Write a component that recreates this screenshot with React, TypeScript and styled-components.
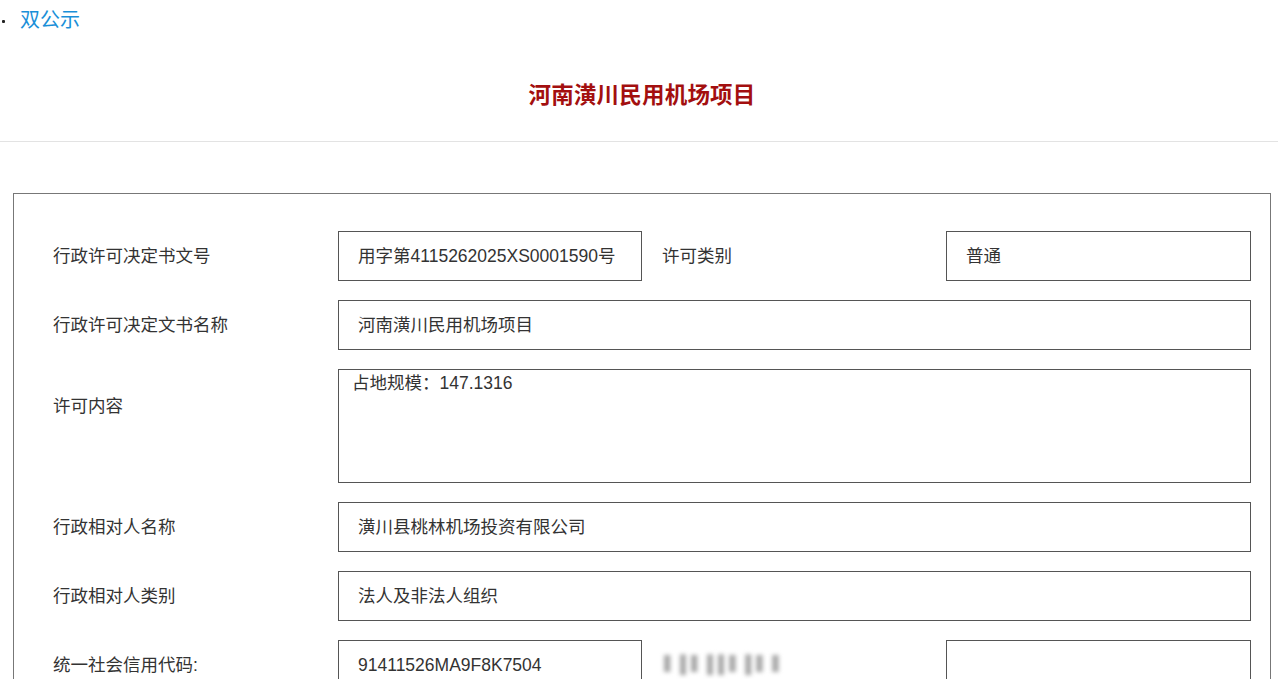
import styled, { createGlobalStyle } from "styled-components";

const GlobalStyle = createGlobalStyle`
  html, body {
    margin: 0;
    padding: 0;
    background: #ffffff;
  }
  body {
    font-family: "Liberation Sans", "Noto Sans CJK SC", sans-serif;
    color: #333333;
  }
`;

interface FieldItem {
  label: string;
  value: string;
}

const StyledPage = styled.div`
  width: 1278px;
  height: 679px;
  overflow: hidden;
`;

const StyledCrumbs = styled.div`
  display: flex;
  align-items: center;
  height: 41px;
  font-size: 20px;
`;

const StyledDot = styled.span`
  width: 3px;
  height: 3px;
  margin: 1px 15px 0 2px;
  background: #222;
  border-radius: 1px;
`;

const StyledCrumbLink = styled.a`
  color: #1a8fd8;
  text-decoration: none;
  line-height: 41px;
`;

const StyledHeader = styled.div`
  display: flex;
  align-items: center;
  justify-content: center;
  height: 101px;
  padding-top: 3px;
  box-sizing: border-box;
  border-bottom: 1px solid #e3e3e3;
`;

const StyledTitle = styled.h1`
  margin: 0;
  padding-left: 6px;
  color: #a30f0f;
  font-size: 22.5px;
  font-weight: bold;
  letter-spacing: 0.2px;
`;

const StyledPanel = styled.div`
  box-sizing: border-box;
  width: 1258px;
  margin: 51px 0 0 13px;
  border: 1px solid #777;
  padding: 37px 19px 40px 39px;
`;

const StyledGrid = styled.div`
  display: grid;
  grid-template-columns: 285px 304px 304px 305px;
  row-gap: 19px;
`;

const StyledLabel = styled.div<{ $offset?: number; $inner?: boolean }>`
  align-self: start;
  height: 50px;
  line-height: 50px;
  font-size: 17.5px;
  color: #333;
  white-space: nowrap;
  padding-top: ${(p) => p.$offset ?? 0}px;
  padding-left: ${(p) => (p.$inner ? 20 : 0)}px;
`;

const StyledInput = styled.div<{ $span?: boolean }>`
  grid-column: ${(p) => (p.$span ? "2 / 5" : "auto")};
  box-sizing: border-box;
  height: 50px;
  border: 1px solid #555;
  padding-left: 19px;
  line-height: 48px;
  font-size: 17.5px;
  color: #333;
  white-space: nowrap;
  overflow: hidden;
`;

const StyledTextArea = styled.div`
  grid-column: 2 / 5;
  box-sizing: border-box;
  height: 114px;
  border: 1px solid #555;
  padding: 1px 13px;
  font-size: 17.5px;
  line-height: 24px;
  color: #333;
`;

const StyledBlurred = styled.div`
  align-self: start;
  height: 50px;
  line-height: 50px;
  margin-left: 22px;
  font-size: 17px;
  color: #a8a8a8;
  filter: blur(2px);
  letter-spacing: -1px;
  white-space: nowrap;
`;

const fullRows: FieldItem[] = [
  { label: "行政相对人名称", value: "潢川县桃林机场投资有限公司" },
  { label: "行政相对人类别", value: "法人及非法人组织" },
];

function App() {
  return (
    <StyledPage>
      <GlobalStyle />
      <StyledCrumbs>
        <StyledDot />
        <StyledCrumbLink href="#">双公示</StyledCrumbLink>
      </StyledCrumbs>
      <StyledHeader>
        <StyledTitle>河南潢川民用机场项目</StyledTitle>
      </StyledHeader>
      <StyledPanel>
        <StyledGrid>
          <StyledLabel>行政许可决定书文号</StyledLabel>
          <StyledInput>用字第4115262025XS0001590号</StyledInput>
          <StyledLabel $inner>许可类别</StyledLabel>
          <StyledInput>普通</StyledInput>

          <StyledLabel>行政许可决定文书名称</StyledLabel>
          <StyledInput $span>河南潢川民用机场项目</StyledInput>

          <StyledLabel $offset={12}>许可内容</StyledLabel>
          <StyledTextArea>占地规模：147.1316</StyledTextArea>

          {fullRows.map((row) => [
            <StyledLabel key={row.label}>{row.label}</StyledLabel>,
            <StyledInput $span key={row.value}>
              {row.value}
            </StyledInput>,
          ])}

          <StyledLabel>统一社会信用代码:</StyledLabel>
          <StyledInput>91411526MA9F8K7504</StyledInput>
          <StyledBlurred>▍▌▍▌▌▍▌▍▍</StyledBlurred>
          <StyledInput />
        </StyledGrid>
      </StyledPanel>
    </StyledPage>
  );
}

export default App;
